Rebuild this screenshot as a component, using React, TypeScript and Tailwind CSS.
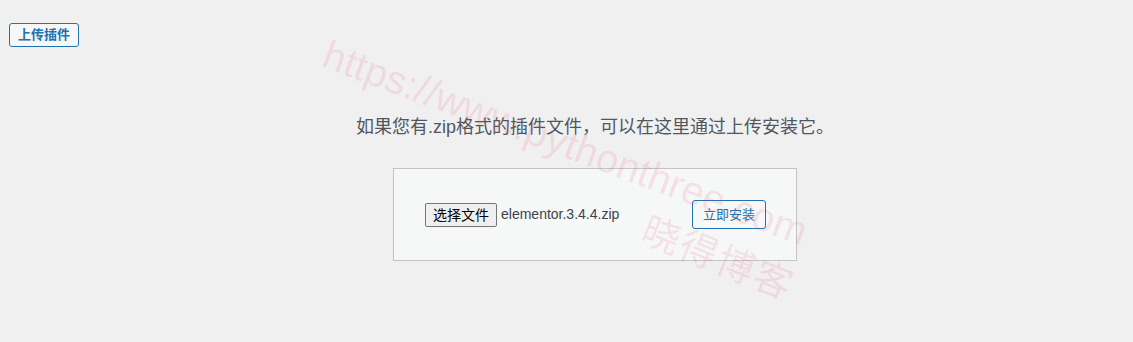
export default function App() {
  const cjk = { fontFamily: '"Liberation Sans", "Noto Sans CJK SC", sans-serif' };

  return (
    <div className="relative min-h-screen overflow-hidden bg-[#f0f0f1] text-[#3c434a]" style={cjk}>
      <div className="pl-[9px] pt-[22px]">
        <button className="h-[24px] rounded-[3px] border border-[#2271b1] bg-[#f6f7f7] px-[8px] text-[13px] font-semibold leading-[20px] text-[#2271b1]">
          上传插件
        </button>
      </div>

      <div className="ml-[57px] flex flex-col items-center">
        <p className="mt-[67px] text-[18px] leading-[27px] text-[#50575e]">
          如果您有.zip格式的插件文件，可以在这里通过上传安装它。
        </p>

        <form className="mt-[27px] flex h-[93px] w-[404px] items-center justify-between border border-[#c3c4c7] bg-[#f6f7f7] pl-[31px] pr-[30px]">
          <div className="flex items-center">
            <button
              type="button"
              className="h-[24px] rounded-[2px] border border-[#767676] bg-[#efefef] px-[7px] text-[14px] leading-[20px] text-black"
            >
              选择文件
            </button>
            <span className="ml-[4px] text-[14px] text-[#3c434a]">elementor.3.4.4.zip</span>
          </div>
          <button
            type="button"
            className="h-[29px] w-[74px] rounded-[3px] border border-[#2271b1] bg-[#f6f7f7] text-[13px] leading-[27px] text-[#2271b1]"
          >
            立即安装
          </button>
        </form>
      </div>

      {/* watermark */}
      <div className="pointer-events-none absolute inset-0">
        <div
          className="absolute left-[332px] top-[34px] origin-top-left rotate-[20.5deg] whitespace-nowrap text-[40px] leading-none text-[rgba(235,60,95,0.12)]"
          style={{ fontFamily: '"Liberation Sans", sans-serif' }}
        >
          https://www.pythonthree.com
        </div>
        <div
          className="absolute left-[652px] top-[208px] origin-top-left rotate-[22deg] whitespace-nowrap text-[38px] leading-none tracking-[2px] text-[rgba(235,60,95,0.12)]"
          style={{ fontFamily: '"Noto Sans CJK SC", sans-serif' }}
        >
          晓得博客
        </div>
      </div>
    </div>
  );
}
